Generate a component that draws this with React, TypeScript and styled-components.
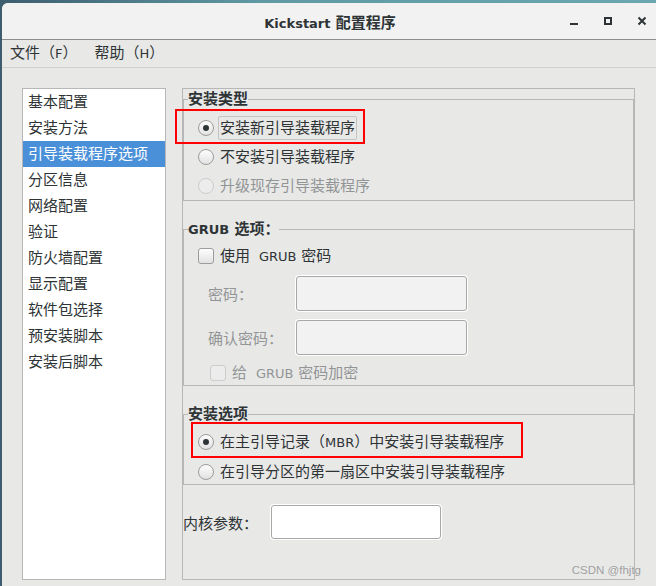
import React from 'react';
import styled, { createGlobalStyle } from 'styled-components';

const GlobalStyle = createGlobalStyle`
  html, body {
    margin: 0;
    padding: 0;
  }
  body {
    width: 656px;
    height: 586px;
    overflow: hidden;
    font-family: "DejaVu Sans", "Noto Sans CJK SC", sans-serif;
    font-size: 15px;
    color: #2e3436;
  }
`;

// Desktop and window chrome
const Desktop = styled.div`
  position: relative;
  box-sizing: border-box;
  width: 656px;
  height: 586px;
  padding: 3px 0 0 2px;
  background: linear-gradient(90deg, #3d5d6e, #5f9aa5 40%, #6aa7ae);
  overflow: hidden;
`;

const Window = styled.div`
  display: flex;
  flex-direction: column;
  width: 660px;
  height: 583px;
  background: #e8e8e7;
  border-radius: 6px 6px 0 0;
  overflow: hidden;
`;

const TitleBar = styled.div`
  display: grid;
  grid-template-columns: 1fr auto 1fr;
  align-items: center;
  height: 36px;
  background: #f2f2f2;
  border-bottom: 1px solid #8e8e8e;
`;

const Title = styled.div`
  grid-column: 2;
  font-weight: bold;
  font-size: 15px;
  color: #2e3436;
  transform: translateX(-2px);
`;

const Controls = styled.div`
  grid-column: 3;
  justify-self: end;
  display: flex;
  gap: 10px;
  padding-right: 8px;
`;

const ControlButton = styled.span`
  display: flex;
  align-items: center;
  justify-content: center;
  width: 24px;
  height: 24px;
  color: #2e3436;
`;

const MenuBar = styled.div`
  display: flex;
  align-items: center;
  gap: 17px;
  height: 27px;
  padding-left: 8px;
  border-bottom: 1px solid #cfcfcf;
`;

const MenuItem = styled.span`
  line-height: 27px;
  color: #2e3436;
`;

const Latin = styled.span<{ $bold?: boolean }>`
  font-family: "DejaVu Sans", sans-serif;
  font-size: 13px;
  line-height: 1;
  font-weight: ${(p) => (p.$bold ? 'bold' : 'normal')};
`;

// Body
const Body = styled.div`
  display: flex;
  gap: 16px;
  padding: 20px 0 0 20px;
`;

const Sidebar = styled.ul`
  box-sizing: border-box;
  width: 144px;
  height: 492px;
  margin: 0;
  padding: 0;
  list-style: none;
  background: #fff;
  border: 1px solid #b7b7b7;
`;

const SidebarItem = styled.li<{ $selected?: boolean }>`
  height: 26px;
  line-height: 26px;
  padding-left: 5px;
  white-space: nowrap;
  background: ${(p) => (p.$selected ? '#4a90d9' : 'transparent')};
  color: ${(p) => (p.$selected ? '#fff' : '#2e3436')};
`;

const Panel = styled.div`
  box-sizing: border-box;
  width: 453px;
  height: 492px;
  border: 1px solid #b7b7b7;
`;

const Frame = styled.fieldset<{ $top?: number }>`
  margin: ${(p) => p.$top ?? 0}px 0 0;
  padding: 0;
  min-width: 0;
  border: 1px solid #b7b7b7;
`;

const Legend = styled.legend`
  height: 20px;
  margin-left: 4px;
  padding: 0;
  font-weight: bold;
  font-size: 15px;
  line-height: 20px;
  color: #2e3436;
`;

const OptionList = styled.div<{ $gap: number; $pad: string }>`
  display: flex;
  flex-direction: column;
  gap: ${(p) => p.$gap}px;
  padding: ${(p) => p.$pad};
`;

const OptionRow = styled.div<{ $indent: number; $top?: number }>`
  position: relative;
  display: flex;
  align-items: center;
  height: 24px;
  margin-top: ${(p) => p.$top ?? 0}px;
  padding-left: ${(p) => p.$indent}px;
`;

const Radio = styled.span<{ $checked?: boolean; $disabled?: boolean }>`
  display: flex;
  align-items: center;
  justify-content: center;
  box-sizing: border-box;
  width: 16px;
  height: 16px;
  border-radius: 50%;
  border: 1px solid ${(p) => (p.$disabled ? '#cdcdcd' : '#9c9c9c')};
  background: ${(p) =>
    p.$disabled ? '#ececec' : 'linear-gradient(#fdfdfd, #e2e2e2)'};
  &::after {
    content: '';
    display: ${(p) => (p.$checked ? 'block' : 'none')};
    width: 6px;
    height: 6px;
    border-radius: 50%;
    background: #2e3436;
  }
`;

const Checkbox = styled.span<{ $disabled?: boolean }>`
  box-sizing: border-box;
  width: 16px;
  height: 16px;
  border-radius: 3px;
  border: 1px solid ${(p) => (p.$disabled ? '#cdcdcd' : '#9c9c9c')};
  background: ${(p) =>
    p.$disabled ? '#ececec' : 'linear-gradient(#fdfdfd, #e2e2e2)'};
`;

const OptionText = styled.span<{ $focused?: boolean; $disabled?: boolean }>`
  box-sizing: border-box;
  height: 24px;
  margin-left: 4px;
  padding: 0 1px;
  line-height: 22px;
  white-space: nowrap;
  border: 1px solid ${(p) => (p.$focused ? '#c4c4c4' : 'transparent')};
  border-radius: 2px;
  color: ${(p) => (p.$disabled ? '#929596' : '#2e3436')};
`;

// red annotation box drawn over the screenshot
const Mark = styled.span<{ $l: number; $t: number; $w: number; $h: number }>`
  position: absolute;
  left: ${(p) => p.$l}px;
  top: ${(p) => p.$t}px;
  width: ${(p) => p.$w}px;
  height: ${(p) => p.$h}px;
  box-sizing: border-box;
  border: 2px solid #f00;
  pointer-events: none;
`;

const PasswordGrid = styled.div`
  display: grid;
  grid-template-columns: 88px 171px;
  row-gap: 9px;
  align-items: center;
  margin-top: 8px;
  padding-left: 24px;
`;

const FieldLabel = styled.span<{ $disabled?: boolean }>`
  white-space: nowrap;
  color: ${(p) => (p.$disabled ? '#929596' : '#2e3436')};
`;

const TextField = styled.input<{ $w: number; $h: number }>`
  box-sizing: border-box;
  width: ${(p) => p.$w}px;
  height: ${(p) => p.$h}px;
  margin: 0;
  border: 1px solid #a8a8a8;
  border-radius: 3px;
  box-shadow: 0 0 0 1px #fff;
  background: #fff;
  outline: none;
  &:disabled {
    background: #f2f2f2;
  }
`;

const KernelRow = styled.div`
  display: flex;
  align-items: center;
  margin-top: 20px;
`;

const KernelLabel = styled.span`
  width: 88px;
  white-space: nowrap;
`;

const Watermark = styled.div`
  position: absolute;
  right: 15px;
  bottom: 10px;
  font-family: "Liberation Sans", sans-serif;
  font-size: 11.5px;
  color: #9d9d9d;
  text-shadow: 0 0 1px #f4f4f4;
`;

const MinIcon = () => (
  <svg width="10" height="10" viewBox="0 0 10 10">
    <rect x="1" y="7" width="8" height="2" fill="currentColor" />
  </svg>
);

const MaxIcon = () => (
  <svg width="10" height="10" viewBox="0 0 10 10">
    <rect x="2" y="2" width="6" height="6" fill="none" stroke="currentColor" strokeWidth="2" />
  </svg>
);

const CloseIcon = () => (
  <svg width="10" height="10" viewBox="0 0 10 10">
    <path d="M1.5 1.5 L8.5 8.5 M8.5 1.5 L1.5 8.5" stroke="currentColor" strokeWidth="2" />
  </svg>
);

const sections = [
  '基本配置',
  '安装方法',
  '引导装载程序选项',
  '分区信息',
  '网络配置',
  '验证',
  '防火墙配置',
  '显示配置',
  '软件包选择',
  '预安装脚本',
  '安装后脚本',
];

export default function App() {
  return (
    <>
      <GlobalStyle />
      <Desktop>
        <Window>
          <TitleBar>
            <Title>
              <Latin $bold>Kickstart</Latin> 配置程序
            </Title>
            <Controls>
              <ControlButton>
                <MinIcon />
              </ControlButton>
              <ControlButton>
                <MaxIcon />
              </ControlButton>
              <ControlButton>
                <CloseIcon />
              </ControlButton>
            </Controls>
          </TitleBar>
          <MenuBar>
            <MenuItem>
              文件（<Latin>F</Latin>）
            </MenuItem>
            <MenuItem>
              帮助（<Latin>H</Latin>）
            </MenuItem>
          </MenuBar>
          <Body>
            <Sidebar>
              {sections.map((s, i) => (
                <SidebarItem key={s} $selected={i === 2}>
                  {s}
                </SidebarItem>
              ))}
            </Sidebar>
            <Panel>
              <Frame>
                <Legend>安装类型</Legend>
                <OptionList $gap={5} $pad="7px 0 2px">
                  <OptionRow $indent={14}>
                    <Radio $checked />
                    <OptionText $focused>安装新引导装载程序</OptionText>
                    <Mark $l={-9} $t={-7} $w={190} $h={35} />
                  </OptionRow>
                  <OptionRow $indent={14}>
                    <Radio />
                    <OptionText>不安装引导装载程序</OptionText>
                  </OptionRow>
                  <OptionRow $indent={14}>
                    <Radio $disabled />
                    <OptionText $disabled>升级现存引导装载程序</OptionText>
                  </OptionRow>
                </OptionList>
              </Frame>

              <Frame $top={18}>
                <Legend>
                  <Latin $bold>GRUB</Latin> 选项：
                </Legend>
                <OptionList $gap={0} $pad="5px 0 0">
                  <OptionRow $indent={14}>
                    <Checkbox />
                    <OptionText>
                      使用 <Latin>&nbsp;GRUB</Latin> 密码
                    </OptionText>
                  </OptionRow>
                  <PasswordGrid>
                    <FieldLabel $disabled>密码：</FieldLabel>
                    <TextField $w={171} $h={35} disabled />
                    <FieldLabel $disabled>确认密码：</FieldLabel>
                    <TextField $w={171} $h={35} disabled />
                  </PasswordGrid>
                  <OptionRow $indent={26} $top={6}>
                    <Checkbox $disabled />
                    <OptionText $disabled>
                      给 <Latin>&nbsp;GRUB</Latin> 密码加密
                    </OptionText>
                  </OptionRow>
                </OptionList>
              </Frame>

              <Frame $top={18}>
                <Legend>安装选项</Legend>
                <OptionList $gap={6} $pad="6px 0 0">
                  <OptionRow $indent={14}>
                    <Radio $checked />
                    <OptionText>
                      在主引导记录（<Latin>MBR</Latin>）中安装引导装载程序
                    </OptionText>
                    <Mark $l={7} $t={-8} $w={332} $h={36} />
                  </OptionRow>
                  <OptionRow $indent={14}>
                    <Radio />
                    <OptionText>在引导分区的第一扇区中安装引导装载程序</OptionText>
                  </OptionRow>
                </OptionList>
              </Frame>

              <KernelRow>
                <KernelLabel>内核参数：</KernelLabel>
                <TextField $w={170} $h={34} />
              </KernelRow>
            </Panel>
          </Body>
        </Window>
        <Watermark>CSDN @fhjtg</Watermark>
      </Desktop>
    </>
  );
}
